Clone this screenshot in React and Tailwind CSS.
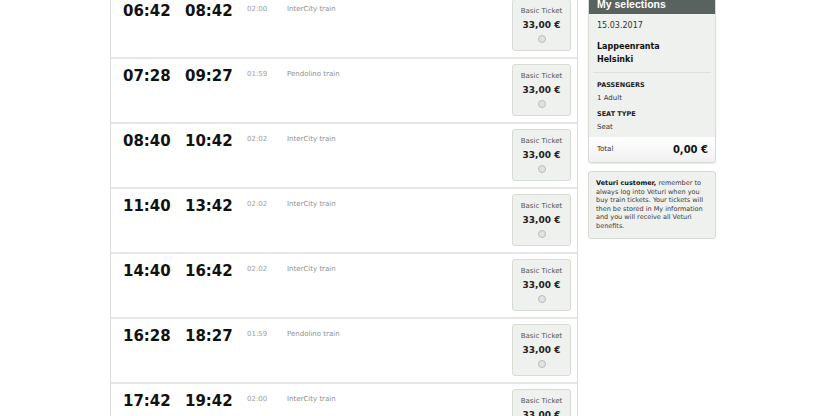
const trains = [
  { dep: '06:42', arr: '08:42', dur: '02:00', type: 'InterCity train' },
  { dep: '07:28', arr: '09:27', dur: '01:59', type: 'Pendolino train' },
  { dep: '08:40', arr: '10:42', dur: '02:02', type: 'InterCity train' },
  { dep: '11:40', arr: '13:42', dur: '02:02', type: 'InterCity train' },
  { dep: '14:40', arr: '16:42', dur: '02:02', type: 'InterCity train' },
  { dep: '16:28', arr: '18:27', dur: '01:59', type: 'Pendolino train' },
  { dep: '17:42', arr: '19:42', dur: '02:00', type: 'InterCity train' },
]

function TrainRow({ train }) {
  return (
    <div className="flex h-[65px] border-b-2 border-[#e6e6e6] pl-[12px] pr-[6px]">
      <div className="flex flex-1 items-start pt-2">
        <div className="w-[62px] text-[15px] font-bold leading-[18px] text-[#111]">{train.dep}</div>
        <div className="w-[62px] text-[15px] font-bold leading-[18px] text-[#111]">{train.arr}</div>
        <div className="w-[40px] mt-[2px] text-[7px] leading-[10px] text-[#a0a0a0]">{train.dur}</div>
        <div className="mt-[2px] text-[7px] leading-[10px] text-[#8e8e8e]">{train.type}</div>
      </div>
      <div className="mt-[5px] flex h-[52px] w-[59px] flex-col items-center rounded-[3px] border border-[#d6dbd4] bg-[#eef1ed] pt-[6px]">
        <div className="text-[7px] leading-[10px] text-[#555]">Basic Ticket</div>
        <div className="mt-[3px] text-[9px] font-bold leading-[12px] text-[#222]">33,00 €</div>
        <div className="mt-[4px] h-2 w-2 rounded-full border border-[#bcbcbc] bg-[#e2e2e2]" />
      </div>
    </div>
  )
}

export default function App() {
  return (
    <div className="h-[416px] overflow-hidden bg-white" style={{ fontFamily: '"DejaVu Sans", Verdana, sans-serif' }}>
      <div className="-mt-[6px] ml-[110px] flex items-start gap-[10px]">
        {/* Train list */}
        <div className="w-[468px] border-x border-[#dcdcdc]">
          {trains.map((t) => (
            <TrainRow key={t.dep} train={t} />
          ))}
        </div>

        {/* Sidebar */}
        <div className="w-[128px]">
          <div className="overflow-hidden rounded-[3px] border border-[#d5dad3] bg-[#eef1ed] shadow-[0_1px_1px_rgba(0,0,0,0.08)]">
            <div
              className="flex h-[19px] items-center bg-[#59625f] pl-[8px] text-[10.5px] font-bold text-white"
              style={{ fontFamily: '"Liberation Sans", Arial, sans-serif' }}
            >
              My selections
            </div>
            <div className="px-[8px] pt-[6px] text-[#333]">
              <div className="text-[8px] leading-[12px]">15.03.2017</div>
              <div className="mt-[8px] text-[8px] font-bold leading-[13px] text-[#111]">Lappeenranta</div>
              <div className="text-[8px] font-bold leading-[13px] text-[#111]">Helsinki</div>
            </div>
            <div className="mx-[4px] mt-[6px] h-px bg-[#dde1db]" />
            <div className="px-[8px] pb-[5px] pt-[7px] text-[#333]">
              <div className="text-[6.5px] font-bold leading-[10px] text-[#222]">PASSENGERS</div>
              <div className="mt-[3px] text-[7px] leading-[10px] text-[#3d3346]">1 Adult</div>
              <div className="mt-[6px] text-[6.5px] font-bold leading-[10px] text-[#222]">SEAT TYPE</div>
              <div className="mt-[3px] text-[7px] leading-[10px]">Seat</div>
            </div>
            <div className="flex h-[25px] items-center justify-between bg-gradient-to-b from-white to-[#f1f1f1] pl-[8px] pr-[7px]">
              <span className="text-[7px] text-[#333]">Total</span>
              <span className="text-[10px] font-bold text-[#111]">0,00 €</span>
            </div>
          </div>

          <div className="mt-[8px] rounded-[3px] border border-[#d5dad3] bg-[#eef1ed] px-[7px] pb-[8px] pt-[7px] text-[6.5px] leading-[8.5px] text-[#3d3a40]">
            <span className="font-bold text-[#111]">Veturi customer,</span> remember to always log into Veturi when you buy train tickets. Your tickets will then be stored in My information and you will receive all Veturi benefits.
          </div>
        </div>
      </div>
    </div>
  )
}
